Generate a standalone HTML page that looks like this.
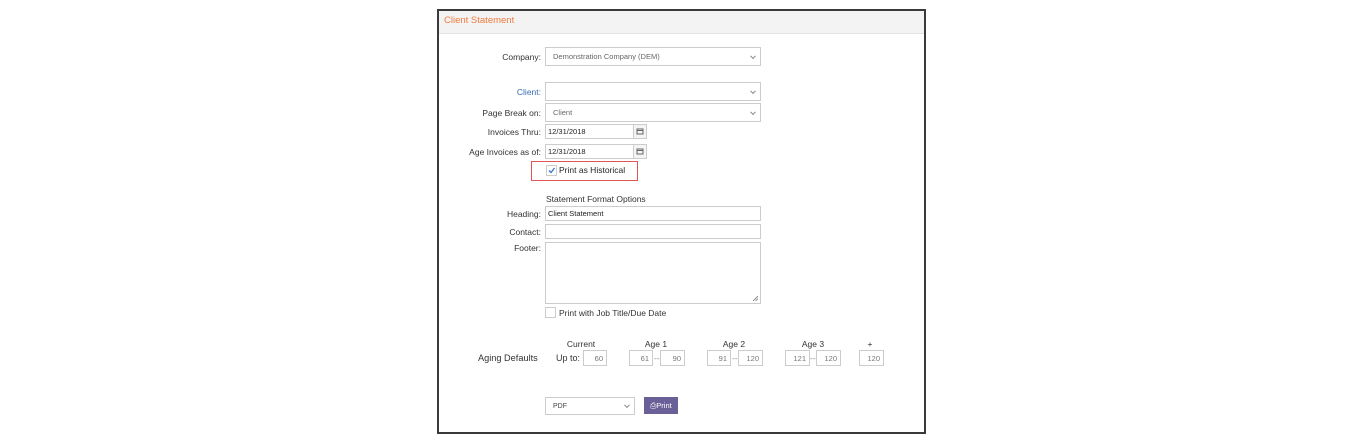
<!DOCTYPE html>
<html><head><style>
body{margin:0;width:1365px;height:443px;background:#fff;position:relative;font-family:"Liberation Sans",sans-serif;font-size:8.5px;color:#333;overflow:hidden}
.a{position:absolute}
.frame{left:437px;top:9px;width:485px;height:421px;border:2px solid #3a3a3a;background:#fff}
.hdr{left:439px;top:11px;width:485px;height:22px;background:#f3f3f3;border-bottom:1px solid #e2e2e2}
.box{position:absolute;border:1px solid #ccc;background:#fff;box-sizing:border-box;font-size:7.5px;color:#555;padding-left:7px;display:flex;align-items:center}
.lbl{position:absolute;text-align:right;width:120px;font-size:8.5px;color:#333}
.chev{position:absolute;right:5px;top:50%;width:3px;height:3px;border-right:1px solid #888;border-bottom:1px solid #888;transform:translateY(-70%) rotate(45deg)}
.cal{position:absolute;border:1px solid #ccc;background:#f4f4f4;box-sizing:border-box;width:14px;height:15px}
.num{justify-content:flex-end;padding-right:3px;padding-left:0;color:#777}
.h{position:absolute;font-size:8.5px;text-align:center;width:40px}
</style></head><body>
<div class="a frame"></div>
<div class="a hdr"></div>
<div class="a" style="left:444px;top:15px;color:#f07b3f;font-size:9.5px">Client Statement</div>

<div class="lbl" style="left:421px;top:52px">Company:</div>
<div class="box" style="left:545px;top:47px;width:216px;height:19px;color:#666">Demonstration Company (DEM)<span class="chev"></span></div>

<div class="lbl" style="left:421px;top:87px;color:#3a6bb0">Client:</div>
<div class="box" style="left:545px;top:82px;width:216px;height:19px"><span class="chev"></span></div>

<div class="lbl" style="left:421px;top:108px">Page Break on:</div>
<div class="box" style="left:545px;top:103px;width:216px;height:19px;color:#666">Client<span class="chev"></span></div>

<div class="lbl" style="left:421px;top:127px">Invoices Thru:</div>
<div class="box" style="left:545px;top:124px;width:89px;height:15px;padding-left:2px;color:#222">12/31/2018</div>
<div class="cal" style="left:633px;top:124px"><svg width="12" height="13" viewBox="0 0 12 13"><rect x="3" y="4" width="6" height="5" fill="none" stroke="#666" stroke-width="1"/><line x1="3" y1="5.5" x2="9" y2="5.5" stroke="#666"/></svg></div>

<div class="lbl" style="left:421px;top:147px">Age Invoices as of:</div>
<div class="box" style="left:545px;top:144px;width:89px;height:15px;padding-left:2px;color:#222">12/31/2018</div>
<div class="cal" style="left:633px;top:144px"><svg width="12" height="13" viewBox="0 0 12 13"><rect x="3" y="4" width="6" height="5" fill="none" stroke="#666" stroke-width="1"/><line x1="3" y1="5.5" x2="9" y2="5.5" stroke="#666"/></svg></div>

<div class="a" style="left:531px;top:161px;width:105px;height:18px;border:1.5px solid #e05555"></div>
<div class="a" style="left:546px;top:165px;width:9px;height:9px;border:1px solid #ccc;background:#fff"><svg width="9" height="9" viewBox="0 0 9 9" style="position:absolute;left:0;top:0"><path d="M2 4.5 L4 6.5 L7.5 2" fill="none" stroke="#3a7bc8" stroke-width="1.4"/></svg></div>
<div class="a" style="left:559px;top:165px;color:#222">Print as Historical</div>

<div class="a" style="left:546px;top:194px">Statement Format Options</div>
<div class="lbl" style="left:421px;top:209px">Heading:</div>
<div class="box" style="left:545px;top:206px;width:216px;height:15px;padding-left:2px;color:#222">Client Statement</div>
<div class="lbl" style="left:421px;top:227px">Contact:</div>
<div class="box" style="left:545px;top:224px;width:216px;height:15px"></div>
<div class="lbl" style="left:421px;top:243px">Footer:</div>
<div class="box" style="left:545px;top:242px;width:216px;height:62px"><svg width="6" height="6" style="position:absolute;right:2px;bottom:2px"><path d="M1 6 L6 1 M3.5 6 L6 3.5" stroke="#777" stroke-width="0.8"/></svg></div>
<div class="a" style="left:545px;top:307px;width:9px;height:9px;border:1px solid #ccc"></div>
<div class="a" style="left:559px;top:308px">Print with Job Title/Due Date</div>

<div class="h" style="left:561px;top:339px">Current</div>
<div class="h" style="left:636px;top:339px">Age 1</div>
<div class="h" style="left:714px;top:339px">Age 2</div>
<div class="h" style="left:793px;top:339px">Age 3</div>
<div class="h" style="left:850px;top:339px">+</div>
<div class="a" style="left:478px;top:353px;font-size:9.2px">Aging Defaults</div>
<div class="a" style="left:556px;top:353px;font-size:9px">Up to:</div>
<div class="box num" style="left:583px;top:350px;width:24px;height:16px">60</div>
<div class="box num" style="left:629px;top:350px;width:24px;height:16px">61</div>
<div class="a" style="left:654px;top:353px;color:#888">---</div>
<div class="box num" style="left:660px;top:350px;width:25px;height:16px">90</div>
<div class="box num" style="left:707px;top:350px;width:24px;height:16px">91</div>
<div class="a" style="left:732px;top:353px;color:#888">---</div>
<div class="box num" style="left:738px;top:350px;width:25px;height:16px">120</div>
<div class="box num" style="left:785px;top:350px;width:25px;height:16px">121</div>
<div class="a" style="left:810px;top:353px;color:#888">---</div>
<div class="box num" style="left:816px;top:350px;width:25px;height:16px">120</div>
<div class="box num" style="left:859px;top:350px;width:25px;height:16px">120</div>

<div class="box" style="left:545px;top:397px;width:90px;height:18px;font-size:7px;color:#444">PDF<span class="chev"></span></div>
<div class="a" style="left:644px;top:397px;width:34px;height:17px;background:#6a5f96;color:#fff;font-size:7.5px;display:flex;align-items:center;justify-content:center">&#9113;Print</div>
</body></html>
